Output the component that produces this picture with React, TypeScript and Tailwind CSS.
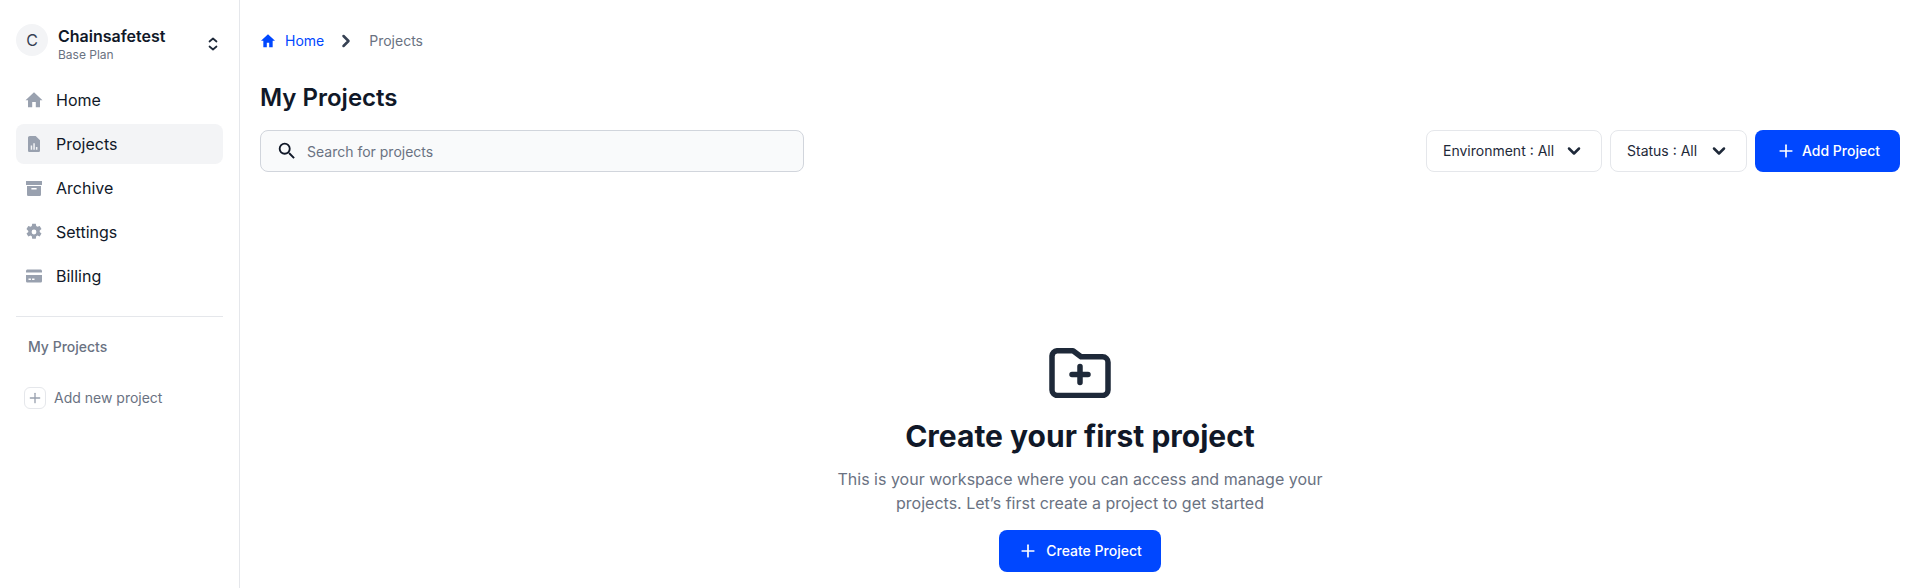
import { ChevronDown, ChevronRight, Plus } from 'lucide-react';

const navItems = [
  { label: 'Home', icon: 'M8.2 17.2v-5.2h3.6v5.2H16v-7h2.5L10 2.2 1.5 10.2H4v7h4.2Z' },
  { label: 'Projects', icon: 'M5.8 2h5.9L16 6.3v10.1c0 .9-.7 1.6-1.6 1.6H5.6c-.9 0-1.6-.7-1.6-1.6V3.8C4 2.8 4.8 2 5.8 2Zm.9 9.4v4.4h1.5v-4.4H6.7Zm2.6-2.2v6.6h1.5V9.2H9.3Zm2.6 3.7v2.9h1.5v-2.9h-1.5Z', active: true },
  { label: 'Archive', icon: 'M2 3h16v4H2V3Zm1 5h14v8.4c0 .9-.7 1.6-1.6 1.6H4.6c-.9 0-1.6-.7-1.6-1.6V8Zm4.4 2v1.6h5.2V10H7.4Z' },
  { label: 'Settings', icon: 'M8.2 1.8h3.6l.4 2.3 1.2.7 2.3-.8 1.8 3-1.8 1.5v1.4l1.8 1.5-1.8 3-2.3-.8-1.2.7-.4 2.5H8.2l-.4-2.5-1.2-.7-2.3.8-1.8-3 1.8-1.5V9L2.5 7l1.8-3 2.3.8 1.2-.7.4-2.3ZM10 7.6a2.4 2.4 0 1 0 0 4.8 2.4 2.4 0 0 0 0-4.8Z' },
  { label: 'Billing', icon: 'M3.6 3.5h12.8c.9 0 1.6.7 1.6 1.6v1.4H2V5.1c0-.9.7-1.6 1.6-1.6ZM2 9h16v5.9c0 .9-.7 1.6-1.6 1.6H3.6c-.9 0-1.6-.7-1.6-1.6V9Zm2.5 3.6v1.5h2.4v-1.5H4.5Zm3.6 0v1.5h2.4v-1.5H8.1Z' },
];

function Sidebar() {
  return (
    <aside className="w-[240px] h-[588px] shrink-0 border-r border-gray-200 px-4 pt-6 overflow-hidden">
      <div className="flex items-center h-8 mb-6">
        <div className="w-8 h-8 rounded-full bg-gray-100 flex items-center justify-center text-base text-gray-700">C</div>
        <div className="ml-[10px] flex-1 pt-[9px]">
          <div className="text-base leading-5 font-semibold text-gray-900">Chainsafetest</div>
          <div className="mt-[1px] text-xs leading-4 text-gray-500">Base Plan</div>
        </div>
        <svg className="w-4 h-4 mr-[2px] mt-2 text-gray-800" viewBox="0 0 16 16" fill="none" stroke="currentColor" strokeWidth="1.7" strokeLinecap="round" strokeLinejoin="round">
          <path d="m4.5 5.5 3.5-3 3.5 3M4.5 10.5l3.5 3 3.5-3" />
        </svg>
      </div>
      <nav className="flex flex-col gap-1">
        {navItems.map((item) => (
          <div key={item.label} className={`flex items-center h-10 rounded-lg px-2 gap-3 ${item.active ? 'bg-gray-100' : ''}`}>
            <svg className="w-5 h-5 text-gray-400" viewBox="0 0 20 20" fill="currentColor">
              <path fillRule="evenodd" d={item.icon} />
            </svg>
            <span className="text-base text-gray-900">{item.label}</span>
          </div>
        ))}
      </nav>
      <div className="border-t border-gray-200 mt-5 pt-5 pl-3 text-sm leading-5 font-medium text-gray-500">My Projects</div>
      <div className="flex items-center mt-[30px] pl-2 gap-2">
        <div className="w-[22px] h-[22px] rounded-md border border-gray-200 flex items-center justify-center">
          <Plus className="w-4 h-4 text-gray-400" />
        </div>
        <span className="text-sm text-gray-500">Add new project</span>
      </div>
    </aside>
  );
}

function FilterButton({ label, width }: { label: string; width: string }) {
  return (
    <div className={`flex items-center justify-between h-[42px] rounded-lg border border-gray-200 pl-4 pr-[17px] ${width}`}>
      <span className="text-sm text-gray-800">{label}</span>
      <ChevronDown className="w-5 h-5 text-gray-800" strokeWidth={3} />
    </div>
  );
}

function PrimaryButton({ label, width, gap }: { label: string; width: string; gap: string }) {
  return (
    <div className={`flex items-center justify-center h-[42px] rounded-lg bg-[#0047ff] text-sm font-medium text-white ${gap} ${width}`}>
      <Plus className="w-5 h-5" />
      <span>{label}</span>
    </div>
  );
}

export default function App() {
  return (
    <div className="flex h-[588px] overflow-hidden bg-white font-['Inter',sans-serif]">
      <Sidebar />
      <main className="flex-1 px-5 pt-8">
        <div className="flex items-center h-[18px] text-sm">
          <svg className="w-4 h-4 text-[#0047ff]" viewBox="0 0 24 24" fill="currentColor">
            <path d="M12 2 1.5 11.5H5v10h5.2v-7h3.6v7H19v-10h3.5L12 2Z" />
          </svg>
          <span className="ml-[9px] text-[#0047ff]">Home</span>
          <ChevronRight className="w-5 h-5 ml-3 mr-[13px] text-gray-700" strokeWidth={3} />
          <span className="text-gray-500">Projects</span>
        </div>
        <h1 className="mt-8 text-2xl leading-8 font-semibold text-gray-900">My Projects</h1>
        <div className="flex items-center mt-4">
          <div className="flex items-center w-[544px] h-[42px] rounded-lg border border-gray-300 bg-gray-50 px-[15px]">
            <svg className="w-[22px] h-[22px] text-gray-900" viewBox="0 0 24 24" fill="currentColor">
              <path d="M15.5 14h-.79l-.28-.27A6.471 6.471 0 0 0 16 9.5 6.5 6.5 0 1 0 9.5 16c1.61 0 3.09-.59 4.23-1.57l.27.28v.79l5 4.99L20.49 19l-4.99-5zm-6 0C7.01 14 5 11.99 5 9.5S7.01 5 9.5 5 14 7.01 14 9.5 11.99 14 9.5 14z" />
            </svg>
            <span className="ml-[9px] pt-[2px] text-sm text-gray-500">Search for projects</span>
          </div>
          <div className="ml-auto flex items-center gap-2">
            <FilterButton label="Environment : All" width="w-[176px]" />
            <FilterButton label="Status : All" width="w-[137px]" />
            <PrimaryButton label="Add Project" width="w-[145px]" gap="gap-[6px] pl-[1px]" />
          </div>
        </div>
        <div className="flex flex-col items-center mt-[176px]">
          <svg className="w-[62px] h-[50px] text-gray-800" viewBox="0 0 62 50" fill="none" stroke="currentColor" strokeWidth="5.5" strokeLinecap="round" strokeLinejoin="round">
            <path d="M8 2.8h16l8 6h21.5a5.5 5.5 0 0 1 5.5 5.5v27.7a5.5 5.5 0 0 1-5.5 5.5h-45A5.5 5.5 0 0 1 3 42V8a5.5 5.5 0 0 1 5-5.2Z" />
            <path d="M31 18.5v16M23 26.5h16" />
          </svg>
          <h2 className="mt-5 text-3xl leading-9 font-bold text-gray-900">Create your first project</h2>
          <p className="mt-[13px] w-[500px] text-center text-base leading-6 text-gray-500">
            This is your workspace where you can access and manage your projects. Let’s first create a project to get started
          </p>
          <div className="mt-[15px]">
            <PrimaryButton label="Create Project" width="w-[162px]" gap="gap-2" />
          </div>
        </div>
      </main>
    </div>
  );
}
